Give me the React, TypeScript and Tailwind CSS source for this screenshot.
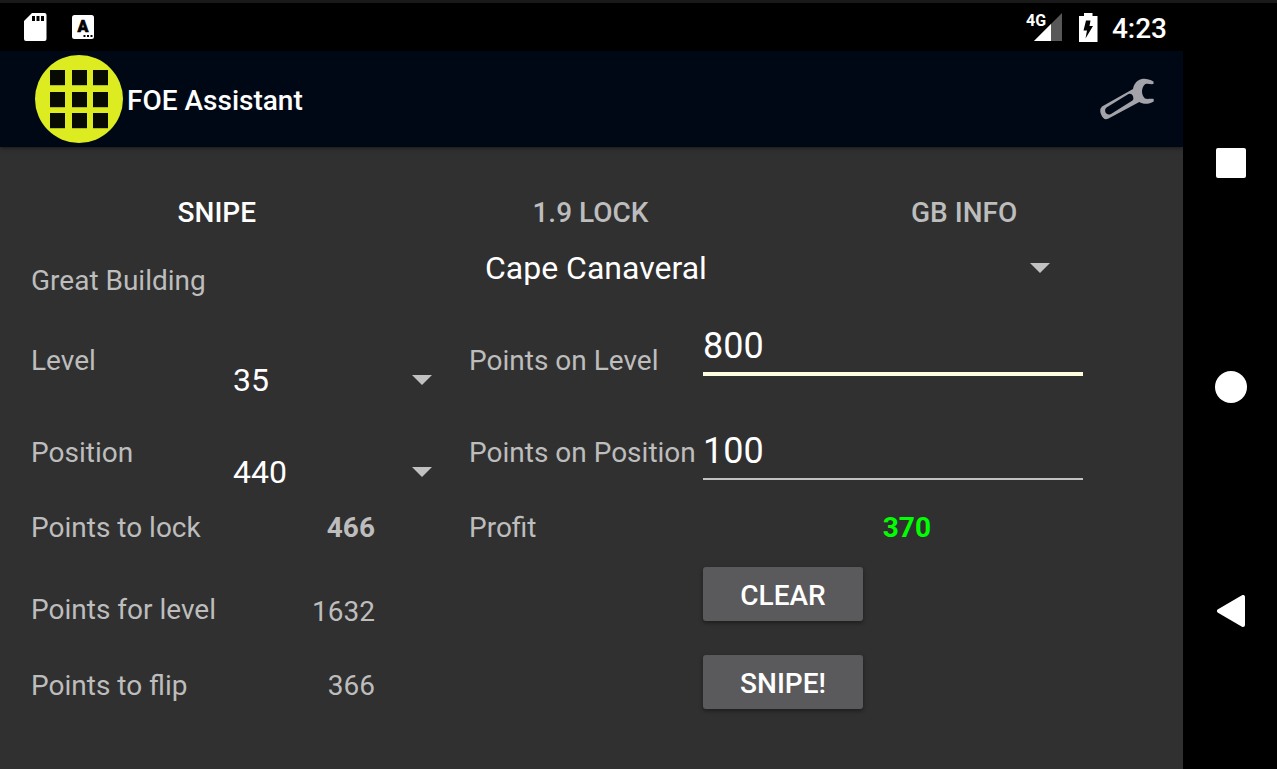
import { useState, type ReactNode } from "react";

const TABS = ["SNIPE", "1.9 LOCK", "GB INFO"];
const BUILDINGS = ["Cape Canaveral", "The Arc", "Alcatraz"];
const LEVELS = ["34", "35", "36"];
const POSITIONS = ["440", "220", "70"];

function StatusBar() {
  return (
    <div className="flex h-12 items-center bg-black pl-6 pr-4 text-white">
      <svg width="23" height="28" viewBox="0 0 23 28" aria-label="SD card">
        <path
          d="M8 0H20.500A2 2 0 0 1 22.500 2V26A2 2 0 0 1 20.500 28H2A2 2 0 0 1 0 26V8Z"
          fill="#fff"
        />
        <path d="M8 3h3v5H8zM12.500 3h3v5h-3zM17 3h3v5h-3z" fill="#000" />
      </svg>
      <svg className="ml-[25px]" width="22" height="24" viewBox="0 0 22 24" aria-label="Keyboard">
        <rect width="22" height="24" rx="2.500" fill="#fff" />
        <text
          x="11"
          y="17"
          textAnchor="middle"
          fontFamily="Roboto, sans-serif"
          fontSize="16"
          fontWeight="900"
          fill="#000"
          stroke="#000"
          strokeWidth="0.6"
        >
          A
        </text>
        <path d="M11.500 20h2v2h-2zM15 20h2v2h-2zM18.500 20h2v2h-2z" fill="#000" />
      </svg>
      <svg className="ml-auto" width="36" height="30" viewBox="0 0 36 30" aria-label="4G signal">
        <path d="M36 1V29H8Z" fill="#585858" />
        <path d="M25 12V29H8Z" fill="#fff" />
        <path d="M0 0H19V14.500H0Z" fill="#000" />
        <text x="0" y="14" fontFamily="Roboto, sans-serif" fontSize="16" fontWeight="700" fill="#fff">
          4G
        </text>
      </svg>
      <svg className="ml-4" width="20" height="29" viewBox="0 0 20 29" aria-label="Battery charging">
        <path d="M6 0h8.500v3H19.500v26H1V3h5z" fill="#fff" />
        <path d="M8 7.500H12.500L11.500 13H15L7.500 25.500L9 17.500H5.500Z" fill="#000" />
      </svg>
      <span className="ml-[14px] pt-1 text-[28px] font-medium leading-8">4:23</span>
    </div>
  );
}

function Logo() {
  return (
    <svg width="88" height="88" viewBox="0 0 88 88" aria-hidden="true">
      <circle cx="44" cy="44" r="44" fill="#dcec20" />
      {[15, 37, 58].map((y) =>
        [15, 37, 58].map((x) => (
          <g key={`${x}-${y}`}>
            <rect x={x} y={y + 1} width="15" height="15" fill="#000" opacity="0.2" />
            <rect x={x} y={y} width="15" height="15" fill="#080a04" />
          </g>
        ))
      )}
    </svg>
  );
}

function AppBar() {
  return (
    <header className="z-10 flex h-24 items-center bg-[#000816] pl-[35px] pr-7 shadow-[0_1px_4px_rgba(0,0,0,0.5)]">
      <Logo />
      <h1 className="ml-1 pt-1 text-[28px] font-medium leading-8 text-white">FOE Assistant</h1>
      <button type="button" aria-label="Settings" className="ml-auto">
        <svg width="55" height="42" viewBox="0 0 55 42">
          <path
            fill="#a3a3a9"
            fillRule="evenodd"
            d="M53.500 3.500C50 1.500 46 .500 43 .800C37 1.500 34 6 33 11L2 28.500Q0 30 .300 34Q1.500 39 4.500 41Q6.500 41.500 8.500 40.500L39.300 24C43 26.500 49 26.500 53.700 23.500V21C50 20.500 47 21.500 45 20.500C41 17 41 10 45 6.200C47.500 5.300 51 6.500 53.500 6ZM28.500 16Q31.500 15 33 18Q34 21 32.500 22.500L11 36Q7.500 37.500 5.500 34.500Q4.300 31.500 6.500 29.500Z"
          />
        </svg>
      </button>
    </header>
  );
}

function Dropdown({
  id,
  options,
  initial,
  className,
}: {
  id: string;
  options: string[];
  initial: string;
  className?: string;
}) {
  return (
    <div className={`relative h-10 ${className ?? ""}`}>
      <select
        id={id}
        defaultValue={initial}
        className="h-10 w-full appearance-none bg-transparent pl-4 pr-14 text-[32px] leading-10 text-white outline-none"
      >
        {options.map((o) => (
          <option key={o} className="bg-[#303030]">
            {o}
          </option>
        ))}
      </select>
      <svg
        className="pointer-events-none absolute right-[37px] top-[15px]"
        width="20"
        height="10"
        viewBox="0 0 20 10"
        aria-hidden="true"
      >
        <path d="M0 0H20L10 10Z" fill="#c1c1c1" />
      </svg>
    </div>
  );
}

function RaisedButton({ children, onClick }: { children: ReactNode; onClick?: () => void }) {
  return (
    <button
      type="button"
      onClick={onClick}
      className="col-start-4 ml-1 h-[54px] w-40 rounded-[3px] bg-[#5a5a5c] pt-1 text-[28px] font-medium leading-8 text-white shadow-[0_2px_4px_rgba(0,0,0,0.4)]"
    >
      {children}
    </button>
  );
}

function SnipeForm() {
  const [onLevel, setOnLevel] = useState("800");
  const [onPosition, setOnPosition] = useState("100");

  function clear() {
    setOnLevel("");
    setOnPosition("");
  }

  return (
    <form className="grid grid-cols-[186px_252px_230px_minmax(0,1fr)] grid-rows-[76px_92px_95px_56px_88px_54px] items-start pl-[31px] pr-24 text-[28px] leading-[34px] text-[#bdbdbd]">
      <label htmlFor="building" className="col-span-2 mt-4">
        Great Building
      </label>
      <Dropdown id="building" options={BUILDINGS} initial="Cape Canaveral" className="col-span-2" />

      <label htmlFor="level" className="mt-5">
        Level
      </label>
      <Dropdown id="level" options={LEVELS} initial="35" className="mt-9" />
      <label htmlFor="on-level" className="mt-5">
        Points on Level
      </label>
      <input
        id="on-level"
        inputMode="numeric"
        value={onLevel}
        onChange={(e) => setOnLevel(e.target.value)}
        className="mx-1 h-[52px] border-b-4 border-[#fffde0] bg-transparent pb-1 text-[36px] leading-10 text-white outline-none"
      />

      <label htmlFor="position" className="mt-5">
        Position
      </label>
      <Dropdown id="position" options={POSITIONS} initial="440" className="mt-9" />
      <label htmlFor="on-position" className="mt-5 whitespace-nowrap">
        Points on Position
      </label>
      <input
        id="on-position"
        inputMode="numeric"
        value={onPosition}
        onChange={(e) => setOnPosition(e.target.value)}
        className="mx-1 mt-3 h-[52px] border-b-2 border-[#c1c1c1] bg-transparent pb-1 text-[36px] leading-10 text-white outline-none"
      />

      <span>Points to lock</span>
      <output className="pr-[94px] text-right font-bold">466</output>
      <span>Profit</span>
      <output className="pr-[156px] text-right font-bold text-[#00ff00]">370</output>

      <span className="mt-[26px]">Points for level</span>
      <output className="mt-7 pr-[94px] text-right">1632</output>
      <RaisedButton onClick={clear}>CLEAR</RaisedButton>

      <span className="mt-[14px]">Points to flip</span>
      <output className="mt-[14px] pr-[94px] text-right">366</output>
      <RaisedButton>SNIPE!</RaisedButton>
    </form>
  );
}

function SystemNav() {
  return (
    <nav className="flex w-[94px] shrink-0 flex-col items-center justify-center gap-48 bg-black pl-0.5 pt-0.5">
      <button type="button" aria-label="Recent apps">
        <svg width="32" height="32" viewBox="0 0 32 32">
          <rect x="1" y="1" width="30" height="30" rx="2" fill="#fff" />
        </svg>
      </button>
      <button type="button" aria-label="Home">
        <svg width="32" height="32" viewBox="0 0 32 32">
          <circle cx="16" cy="16" r="16" fill="#fff" />
        </svg>
      </button>
      <button type="button" aria-label="Back">
        <svg width="32" height="32" viewBox="0 0 32 32">
          <path
            d="M4 16 28 2V30Z"
            fill="#fff"
            stroke="#fff"
            strokeWidth="4"
            strokeLinejoin="round"
          />
        </svg>
      </button>
    </nav>
  );
}

export default function App() {
  const [tab, setTab] = useState(TABS[0]);

  return (
    <div className="flex min-h-screen flex-col border-t-[3px] border-[#191919] bg-[#303030] font-['Roboto',sans-serif]">
      <div className="flex flex-1">
        <div className="flex min-w-0 flex-1 flex-col">
          <StatusBar />
          <AppBar />
          <main className="flex-1">
            <div role="tablist" className="grid grid-cols-3 pl-[30px] pr-8 pt-[49px]">
              {TABS.map((t) => (
                <button
                  key={t}
                  type="button"
                  role="tab"
                  aria-selected={t === tab}
                  onClick={() => setTab(t)}
                  className={`pb-[18px] text-[28px] font-medium leading-[34px] ${
                    t === tab ? "text-white" : "text-[#bdbdbd]"
                  }`}
                >
                  {t}
                </button>
              ))}
            </div>
            <SnipeForm />
          </main>
        </div>
        <SystemNav />
      </div>
    </div>
  );
}
